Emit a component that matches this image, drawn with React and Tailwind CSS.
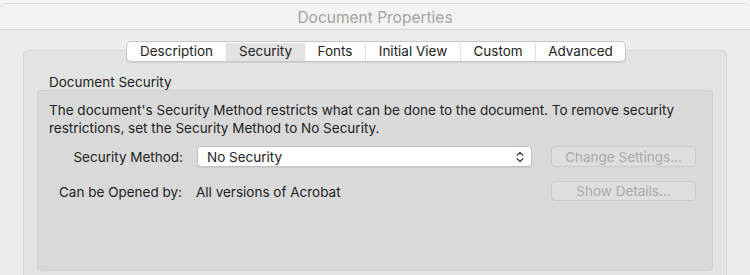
import { ChevronsUpDown } from "lucide-react";

const tabs = ["Description", "Security", "Fonts", "Initial View", "Custom", "Advanced"];
const tabWidths = ["w-[99px]", "w-[78px]", "w-[61px]", "w-[95px]", "w-[75px]", "w-[90px]"];

export default function App() {
  return (
    <div className="h-[275px] w-[750px] overflow-hidden bg-[#f4f4f4] pt-[3px] font-['Inter',sans-serif] text-[13.5px] text-[#222]">
      <div className="h-full rounded-t-[6px] border-t border-[#dcdcdc] bg-[#ececec]">
        {/* title bar */}
        <div className="flex h-[26px] items-center justify-center rounded-t-[6px] border-b border-[#d4d4d4] bg-[#f3f3f3] pt-[2px] text-[15.5px] text-[#a3a3a3]">
          Document Properties
        </div>

        <div className="px-[23px] pt-[11px]">
          {/* tabs */}
          <div className="relative z-10 flex justify-center pl-[2px]">
            <div className="flex h-[21px] overflow-hidden rounded-[5px] border border-[#c6c6c6] bg-white pt-[1px] shadow-[0_1px_0_rgba(0,0,0,0.08)]">
              {tabs.map((t, i) => (
                <div
                  key={t}
                  className={
                    "flex items-center justify-center leading-none " +
                    tabWidths[i] +
                    (i > 0 ? " border-l border-[#dedede]" : "") +
                    (t === "Security" ? " bg-[#e3e3e3]" : "")
                  }
                >
                  {t}
                </div>
              ))}
            </div>
          </div>

          {/* tab box */}
          <div className="-mt-[12px] h-[240px] rounded-[5px] border border-[#d7d7d7] bg-[#e3e3e3] px-[13px] pt-[23px]">
            <div className="pl-[12px] leading-[16px]">Document Security</div>

            <div className="h-[181px] rounded-[4px] border border-[#cfcfcf] bg-[#d9d9d9] px-[11px] pt-[10px]">
              <p className="leading-[18px]">
                The document's Security Method restricts what can be done to the document. To remove security
                <br />
                restrictions, set the Security Method to No Security.
              </p>

              <div className="mt-[9px] flex h-[21px] items-center">
                <div className="w-[134px] pt-[1px] text-right">Security Method:</div>
                <div className="ml-[14px] flex h-[21px] w-[335px] items-center justify-between rounded-[4px] border border-[#c2c2c2] bg-white pl-[9px] pr-[4px] shadow-[0_1px_0_rgba(0,0,0,0.06)]">
                  <span className="pt-[1px]">No Security</span>
                  <ChevronsUpDown size={14} strokeWidth={2} className="text-[#333]" />
                </div>
                <div className="ml-[19px] flex h-[21px] w-[145px] items-center justify-center rounded-[4px] border border-[#cacaca] bg-[#dedede] pt-[1px] text-[#a9a9a9]">
                  Change Settings...
                </div>
              </div>

              <div className="mt-[14px] flex h-[20px] items-center">
                <div className="w-[133px] pt-[2px] text-right">Can be Opened by:</div>
                <div className="ml-[14px] w-[336px] pt-[2px]">All versions of Acrobat</div>
                <div className="ml-[19px] flex h-[20px] w-[145px] items-center justify-center rounded-[4px] border border-[#cacaca] bg-[#dedede] pt-[1px] text-[#a9a9a9]">
                  Show Details...
                </div>
              </div>
            </div>
          </div>
        </div>
      </div>
    </div>
  );
}
